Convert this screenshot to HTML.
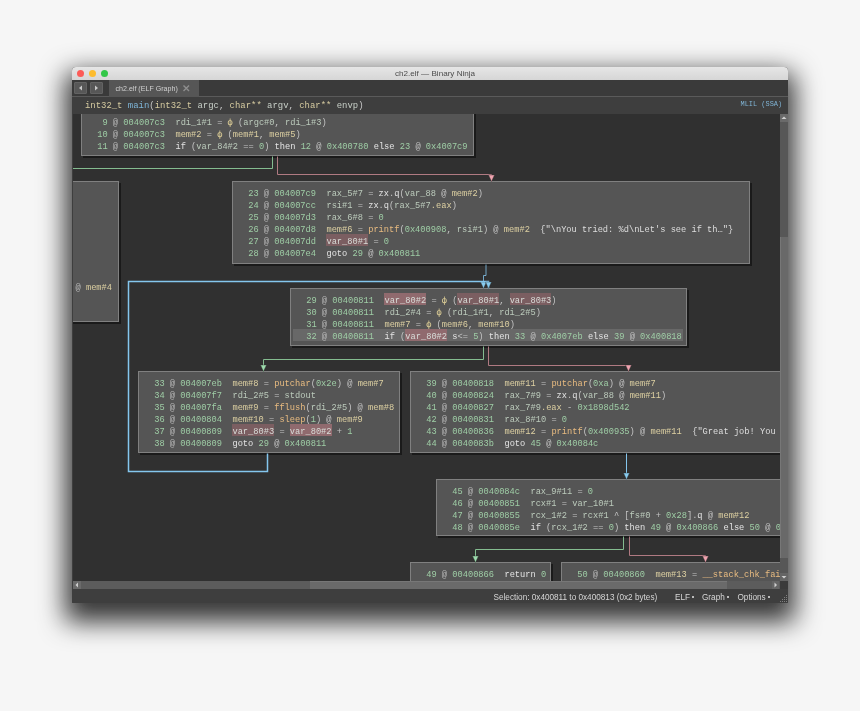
<!DOCTYPE html>
<html><head><meta charset="utf-8"><style>
html,body{margin:0;padding:0;width:860px;height:711px;overflow:hidden;background:#f6f6f6;}
.graph,.hdr,.tabbar,.status,.title{will-change:transform}
.win{position:absolute;left:72px;top:67px;width:716px;height:536px;background:#3e3e3e;border-radius:4px 4px 1px 1px;box-shadow:0 12px 26px 7px rgba(0,0,0,0.78);overflow:hidden}
.title{position:absolute;left:0;top:0;width:716px;height:13px;background:linear-gradient(#e6e6e6,#d6d6d6);font:8.1px "Liberation Sans",sans-serif;color:#4c4c4c;line-height:13px}
.dot{position:absolute;top:3px;width:7px;height:7px;border-radius:50%}
.tabbar{position:absolute;left:0;top:13px;width:716px;height:16px;background:#3a3a3a;border-bottom:1px solid #5a5a5a}
.nav{position:absolute;top:2px;width:13px;height:12px;background:#575757;box-sizing:border-box;border:1px solid #636363;border-radius:1px}
.tab{position:absolute;left:37px;top:0;width:90px;height:17px;background:#565656;font:7.1px "Liberation Sans",sans-serif;color:#d2d2d2;line-height:17px}
.hdr{position:absolute;left:0;top:30px;width:716px;height:17px;background:#3e3e3e;font:8.93px "Liberation Mono",monospace;line-height:17px;white-space:pre}
.graph{position:absolute;left:1px;top:47px;width:707px;height:467px;background:#303030;overflow:hidden}
.node{position:absolute;background:#555555;box-sizing:border-box;border:1px solid #808080;box-shadow:2px 2px 0 #1a1a1a}
.txt{position:absolute;left:15.2px;top:4px;font:8.7px "Liberation Mono",monospace;line-height:12px;white-space:pre;color:#d0d0d0}
.ln{height:12px;line-height:16px}
.rowhl{position:absolute;left:2px;height:12px;background:#686868}
i{font-style:normal}
b{font-weight:normal}
.n{color:#9fcea6} .at{color:#bcbcbc} .v{color:#bccbbc} .m{color:#ddd0a2} .f{color:#e8bb80}
.k{color:#e4e4e4} .p{color:#c4c4c4} .s{color:#dedede} .phi{color:#e4d49a}
.h2{background:#7b5e61 !important}
.h{background:#906a6e;color:#d8dcd8;display:inline-block;height:12px;vertical-align:top}
svg{position:absolute;left:0;top:0}
.bul{display:inline-block;width:2px;height:2px;background:#bbb;vertical-align:middle;margin-top:-1px}
.vsb{position:absolute;left:708px;top:47px;width:8px;height:467px;background:#575757}
.hsb{position:absolute;left:1px;top:514px;width:707px;height:8px;background:#5c5c5c}
.status{position:absolute;left:0;top:522px;width:716px;height:14px;background:#3e3e3e;font:8.2px "Liberation Sans",sans-serif;color:#d6d6d6;line-height:17px;white-space:pre}
</style></head><body>
<div class="win">
  <div class="title"><span style="position:absolute;left:323px;top:0">ch2.elf — Binary Ninja</span>
    <div class="dot" style="left:5px;background:#fc5b57"></div>
    <div class="dot" style="left:17px;background:#fdbc2e"></div>
    <div class="dot" style="left:29px;background:#33c748"></div>
  </div>
  <div class="tabbar">
    <div class="nav" style="left:2px"><svg width="11" height="10" style="position:absolute;left:0;top:0"><path d="M4,5 L7,2.5 L7,7.5 Z" fill="#c8c8c8"/></svg></div>
    <div class="nav" style="left:18px"><svg width="11" height="10" style="position:absolute;left:0;top:0"><path d="M7,5 L4,2.5 L4,7.5 Z" fill="#c8c8c8"/></svg></div>
    <div class="tab"><span style="position:absolute;left:6.5px;top:0.7px">ch2.elf (ELF Graph)</span><svg width="9" height="9" style="position:absolute;left:73px;top:4px"><path d="M1.5,1.5 L7,7 M7,1.5 L1.5,7" stroke="#8e8e8e" stroke-width="1.4"/></svg></div>
  </div>
  <div class="hdr"><span style="position:absolute;left:13px;top:1px"><i style="color:#d6cba0">int32_t</i> <i style="color:#7fb6d9">main</i><i style="color:#c8c8c8">(</i><i style="color:#d6cba0">int32_t</i> <i style="color:#c8d0c8">argc</i><i style="color:#c8c8c8">, </i><i style="color:#d6cba0">char**</i> <i style="color:#c8d0c8">argv</i><i style="color:#c8c8c8">, </i><i style="color:#d6cba0">char**</i> <i style="color:#c8d0c8">envp</i><i style="color:#c8c8c8">)</i></span><span style="position:absolute;left:668.5px;top:-1.5px;font-size:6.95px;color:#7fb3d4">MLIL (SSA)</span></div>
  <div class="graph">
    <div class="node" style="left:8px;top:-100px;width:393px;height:142px"><div class="txt"><div class="ln"></div><div class="ln"></div><div class="ln"></div><div class="ln"></div><div class="ln"></div><div class="ln"></div><div class="ln"></div><div class="ln"></div><div class="ln"><i class="n"> 9</i> <i class="at">@</i> <i class="n">004007c3</i>  <i class="v">rdi_1#1</i> <i class="p">=</i> <i class="phi">ф</i> <i class="p">(</i><i class="v">argc#0</i><i class="p">,</i> <i class="v">rdi_1#3</i><i class="p">)</i></div><div class="ln"><i class="n">10</i> <i class="at">@</i> <i class="n">004007c3</i>  <i class="m">mem#2</i> <i class="p">=</i> <i class="phi">ф</i> <i class="p">(</i><i class="m">mem#1</i><i class="p">,</i> <i class="m">mem#5</i><i class="p">)</i></div><div class="ln"><i class="n">11</i> <i class="at">@</i> <i class="n">004007c3</i>  <i class="k">if</i> <i class="p">(</i><i class="v">var_84#2</i> <i class="p">=</i><i class="p">=</i> <i class="n">0</i><i class="p">)</i> <i class="k">then</i> <i class="n">12</i> <i class="p">@</i> <i class="n">0x400780</i> <i class="k">else</i> <i class="n">23</i> <i class="p">@</i> <i class="n">0x4007c9</i></div></div></div>
<div class="node" style="left:-53px;top:67px;width:99px;height:141px"><div class="txt"><div class="ln"></div><div class="ln"></div><div class="ln"></div><div class="ln"></div><div class="ln"></div><div class="ln"></div><div class="ln"></div><div class="ln"></div></div></div>
<div class="node" style="left:159px;top:67px;width:518px;height:83px"><div class="txt"><div class="ln"><i class="n">23</i> <i class="at">@</i> <i class="n">004007c9</i>  <i class="v">rax_5#7</i> <i class="p">=</i> <i class="k">zx</i><i class="p">.</i><i class="k">q</i><i class="p">(</i><i class="v">var_88</i> <i class="p">@</i> <i class="m">mem#2</i><i class="p">)</i></div><div class="ln"><i class="n">24</i> <i class="at">@</i> <i class="n">004007cc</i>  <i class="v">rsi#1</i> <i class="p">=</i> <i class="k">zx</i><i class="p">.</i><i class="k">q</i><i class="p">(</i><i class="v">rax_5#7</i><i class="m">.eax</i><i class="p">)</i></div><div class="ln"><i class="n">25</i> <i class="at">@</i> <i class="n">004007d3</i>  <i class="v">rax_6#8</i> <i class="p">=</i> <i class="n">0</i></div><div class="ln"><i class="n">26</i> <i class="at">@</i> <i class="n">004007d8</i>  <i class="m">mem#6</i> <i class="p">=</i> <i class="f">printf</i><i class="p">(</i><i class="n">0x400908</i><i class="p">,</i> <i class="v">rsi#1</i><i class="p">)</i> <i class="p">@</i> <i class="m">mem#2</i>  <i class="s">{&quot;\nYou tried: %d\nLet&#x27;s see if th…&quot;}</i></div><div class="ln"><i class="n">27</i> <i class="at">@</i> <i class="n">004007dd</i>  <b class="h h2">var_80#1</b> <i class="p">=</i> <i class="n">0</i></div><div class="ln"><i class="n">28</i> <i class="at">@</i> <i class="n">004007e4</i>  <i class="k">goto</i> <i class="n">29</i> <i class="p">@</i> <i class="n">0x400811</i></div></div></div>
<div class="node" style="left:217px;top:174px;width:397px;height:58px"><div class="rowhl" style="top:40px;width:390px"></div><div class="txt"><div class="ln"><i class="n">29</i> <i class="at">@</i> <i class="n">00400811</i>  <b class="h">var_80#2</b> <i class="p">=</i> <i class="phi">ф</i> <i class="p">(</i><b class="h h2">var_80#1</b><i class="p">,</i> <b class="h h2">var_80#3</b><i class="p">)</i></div><div class="ln"><i class="n">30</i> <i class="at">@</i> <i class="n">00400811</i>  <i class="v">rdi_2#4</i> <i class="p">=</i> <i class="phi">ф</i> <i class="p">(</i><i class="v">rdi_1#1</i><i class="p">,</i> <i class="v">rdi_2#5</i><i class="p">)</i></div><div class="ln"><i class="n">31</i> <i class="at">@</i> <i class="n">00400811</i>  <i class="m">mem#7</i> <i class="p">=</i> <i class="phi">ф</i> <i class="p">(</i><i class="m">mem#6</i><i class="p">,</i> <i class="m">mem#10</i><i class="p">)</i></div><div class="ln"><i class="n">32</i> <i class="at">@</i> <i class="n">00400811</i>  <i class="k">if</i> <i class="p">(</i><b class="h">var_80#2</b> <i class="k">s</i><i class="p">&lt;</i><i class="p">=</i> <i class="n">5</i><i class="p">)</i> <i class="k">then</i> <i class="n">33</i> <i class="p">@</i> <i class="n">0x4007eb</i> <i class="k">else</i> <i class="n">39</i> <i class="p">@</i> <i class="n">0x400818</i></div></div></div>
<div class="node" style="left:65px;top:257px;width:262px;height:82px"><div class="txt"><div class="ln"><i class="n">33</i> <i class="at">@</i> <i class="n">004007eb</i>  <i class="m">mem#8</i> <i class="p">=</i> <i class="f">putchar</i><i class="p">(</i><i class="n">0x2e</i><i class="p">)</i> <i class="p">@</i> <i class="m">mem#7</i></div><div class="ln"><i class="n">34</i> <i class="at">@</i> <i class="n">004007f7</i>  <i class="v">rdi_2#5</i> <i class="p">=</i> <i class="v">stdout</i></div><div class="ln"><i class="n">35</i> <i class="at">@</i> <i class="n">004007fa</i>  <i class="m">mem#9</i> <i class="p">=</i> <i class="f">fflush</i><i class="p">(</i><i class="v">rdi_2#5</i><i class="p">)</i> <i class="p">@</i> <i class="m">mem#8</i></div><div class="ln"><i class="n">36</i> <i class="at">@</i> <i class="n">00400804</i>  <i class="m">mem#10</i> <i class="p">=</i> <i class="f">sleep</i><i class="p">(</i><i class="n">1</i><i class="p">)</i> <i class="p">@</i> <i class="m">mem#9</i></div><div class="ln"><i class="n">37</i> <i class="at">@</i> <i class="n">00400809</i>  <b class="h h2">var_80#3</b> <i class="p">=</i> <b class="h">var_80#2</b> <i class="p">+</i> <i class="n">1</i></div><div class="ln"><i class="n">38</i> <i class="at">@</i> <i class="n">00400809</i>  <i class="k">goto</i> <i class="n">29</i> <i class="p">@</i> <i class="n">0x400811</i></div></div></div>
<div class="node" style="left:337px;top:257px;width:490px;height:82px"><div class="txt"><div class="ln"><i class="n">39</i> <i class="at">@</i> <i class="n">00400818</i>  <i class="m">mem#11</i> <i class="p">=</i> <i class="f">putchar</i><i class="p">(</i><i class="n">0xa</i><i class="p">)</i> <i class="p">@</i> <i class="m">mem#7</i></div><div class="ln"><i class="n">40</i> <i class="at">@</i> <i class="n">00400824</i>  <i class="v">rax_7#9</i> <i class="p">=</i> <i class="k">zx</i><i class="p">.</i><i class="k">q</i><i class="p">(</i><i class="v">var_88</i> <i class="p">@</i> <i class="m">mem#11</i><i class="p">)</i></div><div class="ln"><i class="n">41</i> <i class="at">@</i> <i class="n">00400827</i>  <i class="v">rax_7#9</i><i class="m">.eax</i> <i class="p">-</i> <i class="n">0x1898d542</i></div><div class="ln"><i class="n">42</i> <i class="at">@</i> <i class="n">00400831</i>  <i class="v">rax_8#10</i> <i class="p">=</i> <i class="n">0</i></div><div class="ln"><i class="n">43</i> <i class="at">@</i> <i class="n">00400836</i>  <i class="m">mem#12</i> <i class="p">=</i> <i class="f">printf</i><i class="p">(</i><i class="n">0x400935</i><i class="p">)</i> <i class="p">@</i> <i class="m">mem#11</i>  <i class="s">{&quot;Great job! You got it!&quot;}</i></div><div class="ln"><i class="n">44</i> <i class="at">@</i> <i class="n">0040083b</i>  <i class="k">goto</i> <i class="n">45</i> <i class="p">@</i> <i class="n">0x40084c</i></div></div></div>
<div class="node" style="left:363px;top:365px;width:464px;height:57px"><div class="txt"><div class="ln"><i class="n">45</i> <i class="at">@</i> <i class="n">0040084c</i>  <i class="v">rax_9#11</i> <i class="p">=</i> <i class="n">0</i></div><div class="ln"><i class="n">46</i> <i class="at">@</i> <i class="n">00400851</i>  <i class="v">rcx#1</i> <i class="p">=</i> <i class="v">var_10#1</i></div><div class="ln"><i class="n">47</i> <i class="at">@</i> <i class="n">00400855</i>  <i class="v">rcx_1#2</i> <i class="p">=</i> <i class="v">rcx#1</i> <i class="p">^</i> <i class="p">[</i><i class="v">fs#0</i> <i class="p">+</i> <i class="n">0x28</i><i class="p">]</i><i class="p">.</i><i class="k">q</i> <i class="p">@</i> <i class="m">mem#12</i></div><div class="ln"><i class="n">48</i> <i class="at">@</i> <i class="n">0040085e</i>  <i class="k">if</i> <i class="p">(</i><i class="v">rcx_1#2</i> <i class="p">=</i><i class="p">=</i> <i class="n">0</i><i class="p">)</i> <i class="k">then</i> <i class="n">49</i> <i class="p">@</i> <i class="n">0x400866</i> <i class="k">else</i> <i class="n">50</i> <i class="p">@</i> <i class="n">0x400860</i></div></div></div>
<div class="node" style="left:337px;top:448px;width:141px;height:58px"><div class="txt"><div class="ln"><i class="n">49</i> <i class="at">@</i> <i class="n">00400866</i>  <i class="k">return</i> <i class="n">0</i></div></div></div>
<div class="node" style="left:488px;top:448px;width:339px;height:58px"><div class="txt"><div class="ln"><i class="n">50</i> <i class="at">@</i> <i class="n">00400860</i>  <i class="m">mem#13</i> <i class="p">=</i> <i class="f">__stack_chk_fail</i><i class="p">(</i><i class="p">)</i></div></div></div>
    <svg width="707" height="467"><path d="M199.5,42.5 L199.5,54.5 L-12.5,54.5" fill="none" stroke="#84bc90" stroke-width="1" opacity="1"/>
<path d="M204.5,42.5 L204.5,60.5 L418.5,60.5 L418.5,67.5" fill="none" stroke="#b07a82" stroke-width="1" opacity="1"/>
<path d="M415.5,61 L421.5,61 L418.5,67.5 Z" fill="#f0a4b0" stroke="#2a2a2a" stroke-width="0.4"/>
<path d="M413.0,150.5 L413.0,161.5 L410.5,161.5 L410.5,174.5" fill="none" stroke="#84c6ee" stroke-width="1" opacity="0.8"/>
<path d="M407.5,168 L413.5,168 L410.5,174.5 Z" fill="#88ccf0" stroke="#2a2a2a" stroke-width="0.4"/>
<path d="M194.5,339.5 L194.5,357.5 L55.5,357.5 L55.5,167.5 L415.5,167.5 L415.5,174.5" fill="none" stroke="#84c6ee" stroke-width="1.5" opacity="1"/>
<path d="M412.5,168 L418.5,168 L415.5,174.5 Z" fill="#88ccf0" stroke="#2a2a2a" stroke-width="0.4"/>
<path d="M410.5,232.5 L410.5,245.5 L190.5,245.5 L190.5,257.5" fill="none" stroke="#84bc90" stroke-width="1" opacity="1"/>
<path d="M187.5,251 L193.5,251 L190.5,257.5 Z" fill="#9edcae" stroke="#2a2a2a" stroke-width="0.4"/>
<path d="M415.5,232.5 L415.5,251.5 L555.5,251.5 L555.5,257.5" fill="none" stroke="#b07a82" stroke-width="1" opacity="1"/>
<path d="M552.5,251 L558.5,251 L555.5,257.5 Z" fill="#f0a4b0" stroke="#2a2a2a" stroke-width="0.4"/>
<path d="M553.5,339.5 L553.5,365.5" fill="none" stroke="#84c6ee" stroke-width="1" opacity="1"/>
<path d="M550.5,359 L556.5,359 L553.5,365.5 Z" fill="#88ccf0" stroke="#2a2a2a" stroke-width="0.4"/>
<path d="M550.5,422.5 L550.5,435.5 L402.5,435.5 L402.5,448.5" fill="none" stroke="#84bc90" stroke-width="1" opacity="1"/>
<path d="M399.5,442 L405.5,442 L402.5,448.5 Z" fill="#9edcae" stroke="#2a2a2a" stroke-width="0.4"/>
<path d="M556.5,422.5 L556.5,441.5 L632.5,441.5 L632.5,448.5" fill="none" stroke="#b07a82" stroke-width="1" opacity="1"/>
<path d="M629.5,442 L635.5,442 L632.5,448.5 Z" fill="#f0a4b0" stroke="#2a2a2a" stroke-width="0.4"/></svg>
    <span style="position:absolute;left:2.5px;top:168px;font:8.7px 'Liberation Mono',monospace;line-height:12px;white-space:pre"><i class="at">@</i> <i class="m">mem#4</i></span>
  </div>
  <div class="vsb"><div style="position:absolute;left:0;top:0;width:8px;height:8px;background:#6a6a6a"><svg width="8" height="8" style="position:absolute;left:0;top:0"><path d="M1.5,5 L6.5,5 L4,2.5 Z" fill="#cfcfcf"/></svg></div><div style="position:absolute;left:0;top:123px;width:8px;height:321px;background:#696969;border-left:1px solid #777;box-sizing:border-box"></div><div style="position:absolute;left:0;top:459px;width:8px;height:8px;background:#656565"><svg width="8" height="8" style="position:absolute;left:0;top:0"><path d="M1.5,3 L6.5,3 L4,5.5 Z" fill="#cfcfcf"/></svg></div></div>
  <div class="hsb"><div style="position:absolute;left:0;top:0;width:8px;height:8px;background:#6a6a6a"><svg width="8" height="8" style="position:absolute;left:0;top:0"><path d="M5,1.5 L5,6.5 L2.5,4 Z" fill="#cfcfcf"/></svg></div><div style="position:absolute;left:237px;top:0;width:417px;height:8px;background:#6a6a6a;border-top:1px solid #777;box-sizing:border-box"></div><div style="position:absolute;left:699px;top:0;width:7px;height:8px;background:#656565"><svg width="8" height="8" style="position:absolute;left:0;top:0"><path d="M2.5,1.5 L2.5,6.5 L5,4 Z" fill="#cfcfcf"/></svg></div></div>
  <div style="position:absolute;left:708px;top:514px;width:8px;height:8px;background:#3a3a3a"></div>
  
  <div class="status"><span style="position:absolute;left:421.5px">Selection: 0x400811 to 0x400813 (0x2 bytes)</span><span style="position:absolute;left:603px">ELF <b class="bul"></b></span><span style="position:absolute;left:630px">Graph <b class="bul"></b></span><span style="position:absolute;left:665.5px">Options <b class="bul"></b></span></div>
  <svg width="10" height="10" style="position:absolute;left:706px;top:526px"><g fill="#808080"><rect x="8" y="2" width="1" height="1"/><rect x="6" y="4" width="1" height="1"/><rect x="8" y="4" width="1" height="1"/><rect x="4" y="6" width="1" height="1"/><rect x="6" y="6" width="1" height="1"/><rect x="8" y="6" width="1" height="1"/><rect x="2" y="8" width="1" height="1"/><rect x="4" y="8" width="1" height="1"/><rect x="6" y="8" width="1" height="1"/><rect x="8" y="8" width="1" height="1"/></g></svg>
</div>
</body></html>
